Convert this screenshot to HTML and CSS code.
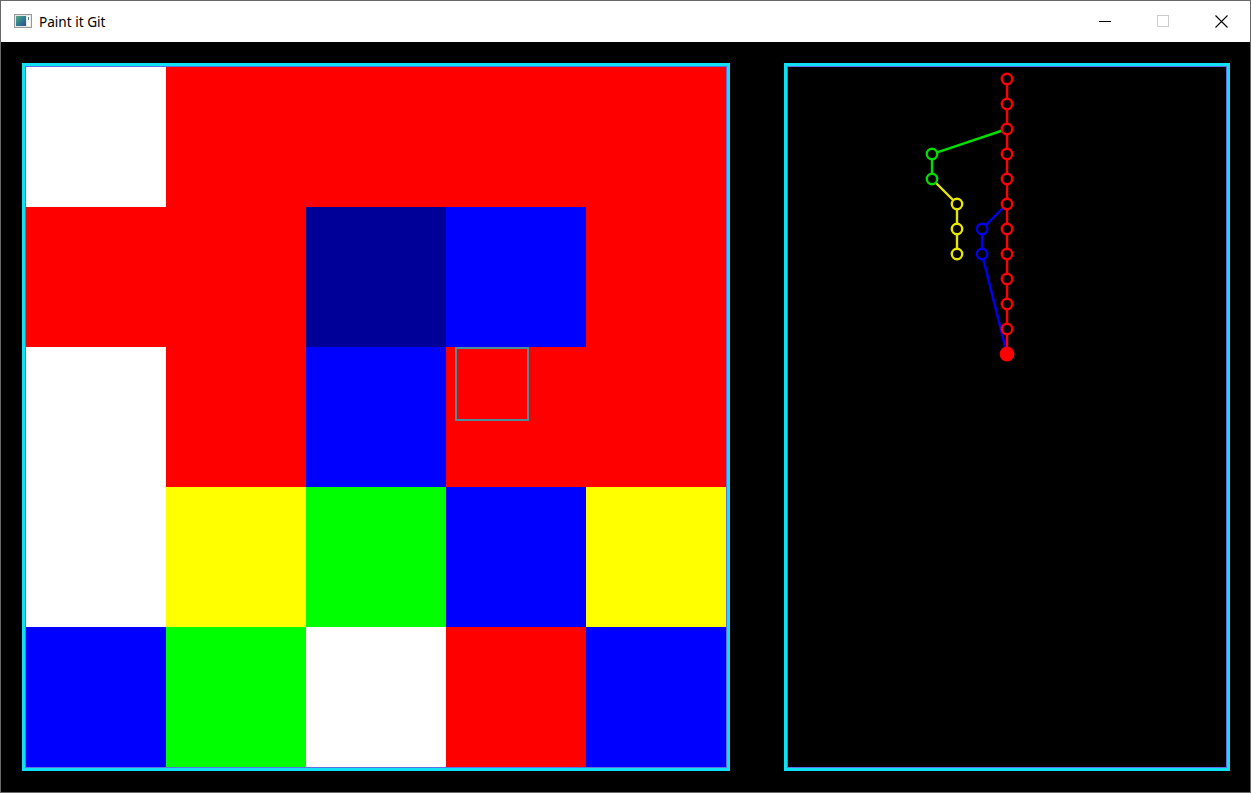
FILE: index.html
```html
<!DOCTYPE html>
<html>
<head>
<meta charset="utf-8">
<title>Paint it Git</title>
<link rel="stylesheet" href="styles.css">
</head>
<body>
<div class="window">
  <div class="titlebar">
    <svg class="app-icon" width="18" height="14" viewBox="0 0 18 14">
      <defs>
        <linearGradient id="g" x1="0" y1="0" x2="1" y2="1">
          <stop offset="0" stop-color="#5aa88a"/>
          <stop offset="0.5" stop-color="#2f7f8f"/>
          <stop offset="1" stop-color="#2a4f9a"/>
        </linearGradient>
      </defs>
      <rect x="0.5" y="0.5" width="17" height="13" fill="#e8e8e8" stroke="#9a9a9a"/>
      <rect x="2" y="2" width="10" height="10" fill="url(#g)"/>
      <rect x="13" y="2" width="3" height="10" fill="#ffffff"/>
      <rect x="14" y="3" width="1" height="3" fill="#5c7e9c"/>
    </svg>
    <span class="title">Paint it Git</span>
    <div class="controls">
      <div class="ctl"><svg width="12" height="12" viewBox="0 0 12 12"><line x1="0" y1="6.5" x2="12" y2="6.5" stroke="#000" stroke-width="1"/></svg></div>
      <div class="ctl"><svg width="12" height="12" viewBox="0 0 12 12"><rect x="0.5" y="0.5" width="11" height="11" fill="none" stroke="#cccccc" stroke-width="1"/></svg></div>
      <div class="ctl"><svg width="13" height="13" viewBox="0 0 13 13"><path d="M0.5 0.5 L12.5 12.5 M12.5 0.5 L0.5 12.5" stroke="#000" stroke-width="1.1"/></svg></div>
    </div>
  </div>
  <div class="content">
    <div class="frame board-frame">
      <div class="frame-inner">
        <div class="board">
          <div class="cell white"></div><div class="cell red"></div><div class="cell red"></div><div class="cell red"></div><div class="cell red"></div>
          <div class="cell red"></div><div class="cell red"></div><div class="cell navy"></div><div class="cell blue"></div><div class="cell red"></div>
          <div class="cell white"></div><div class="cell red"></div><div class="cell blue"></div><div class="cell red"></div><div class="cell red"></div>
          <div class="cell white"></div><div class="cell yellow"></div><div class="cell green"></div><div class="cell blue"></div><div class="cell yellow"></div>
          <div class="cell blue"></div><div class="cell green"></div><div class="cell white"></div><div class="cell red"></div><div class="cell blue"></div>
          <div class="cursor"></div>
        </div>
      </div>
    </div>
    <div class="frame graph-frame">
      <div class="frame-inner graph-inner">
        <svg class="graph" width="438" height="700" viewBox="0 0 438 700">
          <g transform="translate(-788,-67)" fill="none" stroke-width="2.4">
            <line x1="1007" y1="79" x2="1007" y2="354" stroke="#ff0000"/>
            <polyline points="1007,129 932,154 932,179" stroke="#00dd00"/>
            <polyline points="932,179 957,204 957,254" stroke="#e6e600"/>
            <polyline points="1007,204 982,229 982,254 1007,354" stroke="#0000ee"/>
            <g stroke="#ff0000" fill="#000">
              <circle cx="1007" cy="79" r="5.2"/>
              <circle cx="1007" cy="104" r="5.2"/>
              <circle cx="1007" cy="129" r="5.2"/>
              <circle cx="1007" cy="154" r="5.2"/>
              <circle cx="1007" cy="179" r="5.2"/>
              <circle cx="1007" cy="204" r="5.2"/>
              <circle cx="1007" cy="229" r="5.2"/>
              <circle cx="1007" cy="254" r="5.2"/>
              <circle cx="1007" cy="279" r="5.2"/>
              <circle cx="1007" cy="304" r="5.2"/>
              <circle cx="1007" cy="329" r="5.2"/>
            </g>
            <g stroke="#00dd00" fill="#000">
              <circle cx="932" cy="154" r="5.2"/>
              <circle cx="932" cy="179" r="5.2"/>
            </g>
            <g stroke="#e6e600" fill="#000">
              <circle cx="957" cy="204" r="5.2"/>
              <circle cx="957" cy="229" r="5.2"/>
              <circle cx="957" cy="254" r="5.2"/>
            </g>
            <g stroke="#0000ee" fill="#000">
              <circle cx="982" cy="229" r="5.2"/>
              <circle cx="982" cy="254" r="5.2"/>
            </g>
            <circle cx="1007" cy="354" r="7.4" fill="#ff0000" stroke="none"/>
          </g>
        </svg>
      </div>
    </div>
  </div>
</div>
</body>
</html>
```
FILE: styles.css
```css
html, body {
  margin: 0;
  padding: 0;
  background: #000;
}
.window {
  width: 1251px;
  height: 793px;
  box-sizing: border-box;
  border: 1px solid #6a6a6a;
  display: flex;
  flex-direction: column;
  overflow: hidden;
}
.titlebar {
  height: 41px;
  flex: none;
  background: #ffffff;
  display: flex;
  align-items: center;
  padding-left: 13px;
}
.app-icon {
  display: block;
  margin-top: -2px;
}
.title {
  font-family: "Noto Sans", "Open Sans", sans-serif;
  font-size: 13.6px;
  color: #000;
  margin-left: 7px;
  margin-top: -1px;
}
.controls {
  margin-left: auto;
  display: flex;
  height: 100%;
}
.ctl {
  width: 58px;
  height: 100%;
  display: flex;
  align-items: center;
  justify-content: center;
}
.ctl svg {
  display: block;
  margin-top: -1px;
}
.content {
  flex: 1;
  background: #000;
  padding: 21px 20px 21px 21px;
  display: flex;
  gap: 54px;
}
.frame {
  border: 3px solid #0fe0f4;
  box-sizing: border-box;
  height: 708px;
}
.frame-inner {
  border: 1px solid #5a72e4;
  height: 100%;
  box-sizing: border-box;
}
.board-frame {
  width: 708px;
  flex: none;
}
.graph-frame {
  flex: 1;
}
.graph-inner {
  background: #000;
}
.graph {
  display: block;
}
.board {
  position: relative;
  display: grid;
  grid-template-columns: repeat(5, 140px);
  grid-template-rows: repeat(5, 140px);
}
.cell.white { background: #ffffff; }
.cell.red { background: #ff0000; }
.cell.blue { background: #0000ff; }
.cell.navy { background: #000099; }
.cell.yellow { background: #ffff00; }
.cell.green { background: #00ff00; }
.cursor {
  position: absolute;
  left: 429px;
  top: 280px;
  width: 74px;
  height: 74px;
  box-sizing: border-box;
  border: 2px solid #4f8c9c;
}
```
